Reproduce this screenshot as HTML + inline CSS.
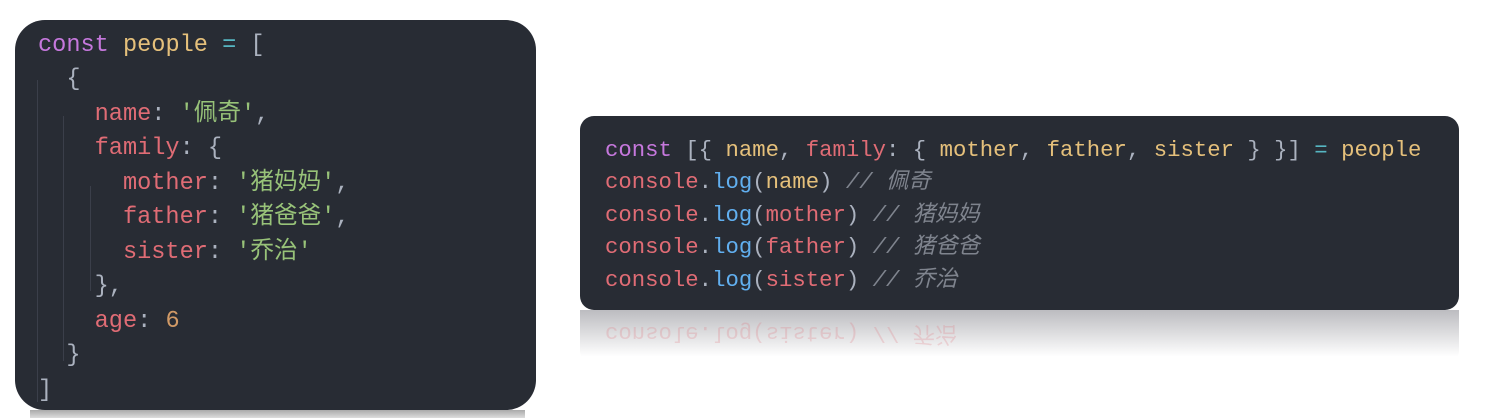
<!DOCTYPE html>
<html><head><meta charset="utf-8"><style>
body{margin:0;width:1487px;height:418px;background:#fff;position:relative;overflow:hidden;font-family:"Liberation Mono","Noto Sans CJK SC",monospace;}
.box{position:absolute;background:#282c34;color:#abb2bf;white-space:pre;}
#l{left:15px;top:20px;width:521px;height:390px;border-radius:30px;font-size:23.6px;}
#l .ln{position:absolute;left:23px;height:34.5px;line-height:34.5px;}
#r{left:580px;top:116px;width:879px;height:194px;border-radius:14px;font-size:22.3px;}
#r .ln{position:absolute;left:25px;height:32.5px;line-height:32.5px;}
.k{color:#c678dd}.y{color:#e5c07b}.r{color:#e06c75}.g{color:#98c379}.o{color:#d19a66}.c{color:#56b6c2}.b{color:#61afef}.cm{color:#7f848e;font-style:italic}
.guide{position:absolute;width:1px;background:#3b3f4a}
#refl{position:absolute;left:580px;top:310px;width:879px;height:55px;overflow:hidden;background:linear-gradient(#bcbcc0,#fff 85%);border-radius:0 0 14px 14px}
#refl .t{position:absolute;left:25px;top:10px;font-size:22.3px;transform:scaleY(-1);color:#e06c75;opacity:.22;white-space:pre}
#lb{position:absolute;left:30px;top:410px;width:495px;height:8px;background:linear-gradient(#aaa,#ddd)}
</style></head><body>
<div id="lb"></div>
<div class="box" id="l">
<div class="guide" style="left:22px;top:60px;height:322px"></div>
<div class="guide" style="left:48px;top:96px;height:245px"></div>
<div class="guide" style="left:75px;top:166px;height:105px"></div>
<div class="ln" style="top:9px"><span class="k">const</span> <span class="y">people</span> <span class="c">=</span> [</div>
<div class="ln" style="top:43px">  {</div>
<div class="ln" style="top:78px">    <span class="r">name</span>: <span class="g">'佩奇'</span>,</div>
<div class="ln" style="top:112px">    <span class="r">family</span>: {</div>
<div class="ln" style="top:147px">      <span class="r">mother</span>: <span class="g">'猪妈妈'</span>,</div>
<div class="ln" style="top:181px">      <span class="r">father</span>: <span class="g">'猪爸爸'</span>,</div>
<div class="ln" style="top:216px">      <span class="r">sister</span>: <span class="g">'乔治'</span></div>
<div class="ln" style="top:250px">    },</div>
<div class="ln" style="top:285px">    <span class="r">age</span>: <span class="o">6</span></div>
<div class="ln" style="top:319px">  }</div>
<div class="ln" style="top:354px">]</div>
</div>
<div class="box" id="r">
<div class="ln" style="top:18px"><span class="k">const</span> [{ <span class="y">name</span>, <span class="r">family</span>: { <span class="y">mother</span>, <span class="y">father</span>, <span class="y">sister</span> } }] <span class="c">=</span> <span class="y">people</span></div>
<div class="ln" style="top:50px"><span class="r">console</span>.<span class="b">log</span>(<span class="y">name</span>) <span class="cm">// 佩奇</span></div>
<div class="ln" style="top:83px"><span class="r">console</span>.<span class="b">log</span>(<span class="r">mother</span>) <span class="cm">// 猪妈妈</span></div>
<div class="ln" style="top:115px"><span class="r">console</span>.<span class="b">log</span>(<span class="r">father</span>) <span class="cm">// 猪爸爸</span></div>
<div class="ln" style="top:148px"><span class="r">console</span>.<span class="b">log</span>(<span class="r">sister</span>) <span class="cm">// 乔治</span></div>
</div>
<div id="refl"><div class="t">console.log(sister) // 乔治</div></div>
</body></html>
